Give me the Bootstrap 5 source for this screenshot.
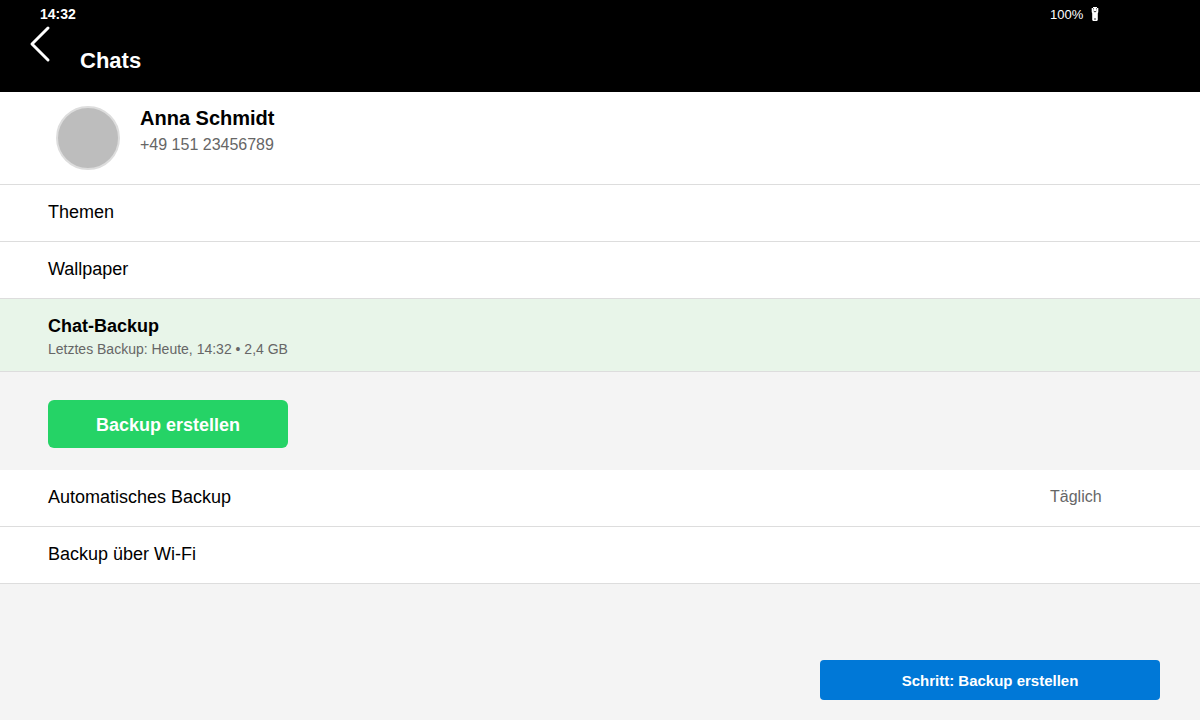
<!DOCTYPE html>
<html lang="de">
<head>
<meta charset="utf-8">
<meta name="viewport" content="width=device-width, initial-scale=1">
<title>Chats</title>
<link href="https://cdn.jsdelivr.net/npm/bootstrap@5.3.0/dist/css/bootstrap.min.css" rel="stylesheet">
<style>
  body { font-family: "Liberation Sans", Arial, sans-serif; background: #f4f4f4; color: #000; }
  .app-header { background: #000; color: #fff; }
  .status-bar { height: 28px; padding-left: 40px; font-size: 14px; line-height: 28px; }
  .side-value { width: 150px; }
  .status-bar .side-value { font-size: 13px; line-height: 30px; gap: 8px; }
  .battery { margin-top: 6px; }
  .title-bar { height: 64px; padding-left: 28px; }
  .back-btn { width: 24px; height: 32px; margin-right: 28px; }
  .title-bar h1 { font-size: 22px; line-height: 66px; }
  .profile { padding: 14px 56px; gap: 20px; border-bottom: 1px solid #ddd; }
  .avatar { width: 64px; height: 64px; background: #bdbdbd; border: 2px solid #ddd; }
  .profile h2 { font-size: 20px; line-height: 24px; margin-bottom: 4px; }
  .profile p { font-size: 16px; line-height: 22px; }
  .muted { color: #666; }
  .settings .list-group-item { padding: 15px 0 17px 48px; border-color: #ddd; border-width: 0 0 1px; font-size: 18px; line-height: 24px; color: #000; background: #fff; }
  .settings .list-group-item.selected { background: #e8f5e9; padding-bottom: 11px; }
  .selected .muted { font-size: 14px; line-height: 22px; }
  .side-value.muted { font-size: 16px; }
  .action-area { padding: 28px 48px 22px; }
  .action-btn { padding: 2px 0 0; }
  .create-btn { width: 240px; height: 48px; font-size: 18px; border-radius: 6px; }
  .create-btn, .create-btn:hover { background: #25d366; color: #fff; }
  .step-area { padding: 20px 40px; }
  .step-btn { width: 340px; height: 40px; font-size: 15px; border-radius: 4px; }
  .step-btn, .step-btn:hover { background: #0078d7; color: #fff; }
</style>
</head>
<body class="d-flex flex-column min-vh-100">
<header class="app-header">
  <div class="status-bar d-flex justify-content-between">
    <span class="fw-bold">14:32</span>
    <span class="side-value d-flex align-items-start">100%
      <svg class="battery" width="8" height="16" viewBox="0 0 8 16" role="img" aria-label="Akku">
        <path d="M2 1h4v1h1.300v4L6.800 7.500V14L6 15H2l-.8-1V7.500L.7 6V2H2z" fill="#fff"/>
        <path d="M2 2.800h1M5 2.800h1M2.600 5l1.400 1 1.400-1M3 13h2" fill="none" stroke="#000" stroke-width=".8"/>
      </svg>
    </span>
  </div>
  <div class="title-bar d-flex align-items-start">
    <button type="button" class="back-btn btn p-0 border-0 d-flex" aria-label="Zurück">
      <svg width="24" height="32" viewBox="0 0 24 32" fill="none" stroke="#fff" stroke-width="3" stroke-linecap="round" stroke-linejoin="round" overflow="visible"><path d="M20 0L4 16L20 32"/></svg>
    </button>
    <h1 class="fw-bold m-0">Chats</h1>
  </div>
</header>
<main>
  <section class="profile d-flex bg-white">
    <div class="avatar rounded-circle flex-shrink-0"></div>
    <div>
      <h2 class="fw-bold">Anna Schmidt</h2>
      <p class="muted m-0">+49 151 23456789</p>
    </div>
  </section>
  <div class="settings list-group rounded-0">
    <a href="#" class="list-group-item">Themen</a>
    <a href="#" class="list-group-item">Wallpaper</a>
    <a href="#" class="list-group-item selected" aria-current="true">
      <strong class="d-block">Chat-Backup</strong>
      <span class="d-block muted">Letztes Backup: Heute, 14:32 • 2,4 GB</span>
    </a>
  </div>
  <div class="action-area">
    <button type="button" class="action-btn create-btn btn border-0 fw-bold">Backup erstellen</button>
  </div>
  <div class="settings list-group rounded-0">
    <a href="#" class="list-group-item d-flex justify-content-between">
      <span>Automatisches Backup</span>
      <span class="side-value muted">Täglich</span>
    </a>
    <a href="#" class="list-group-item">Backup über Wi-Fi</a>
  </div>
</main>
<footer class="step-area mt-auto d-flex justify-content-end">
  <button type="button" class="action-btn step-btn btn border-0 fw-bold">Schritt: Backup erstellen</button>
</footer>
<script src="https://cdn.jsdelivr.net/npm/bootstrap@5.3.0/dist/js/bootstrap.bundle.min.js"></script>
</body>
</html>
